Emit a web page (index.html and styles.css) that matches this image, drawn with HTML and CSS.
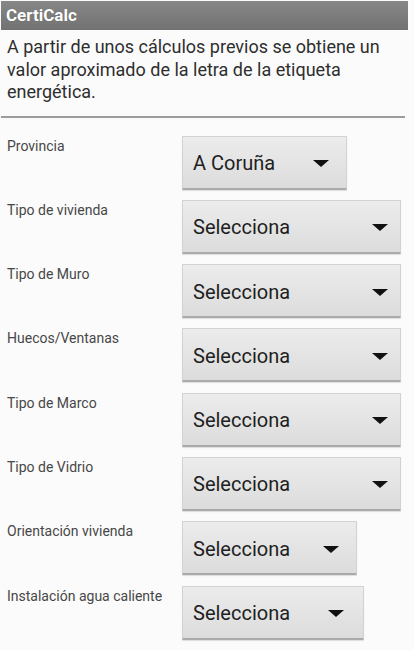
FILE: index.html
```html
<!DOCTYPE html>
<html lang="es">
<head>
<meta charset="utf-8">
<title>CertiCalc</title>
<link rel="stylesheet" href="styles.css">
</head>
<body>
<div class="page">
  <div class="titlebar">CertiCalc</div>
  <p class="intro">A partir de unos cálculos previos se obtiene un valor aproximado de la letra de la etiqueta energética.</p>
  <div class="divider"></div>
  <div class="form">
    <div class="row">
      <div class="label">Provincia</div>
      <div class="spinner spinner-prov"><span class="value">A Coruña</span><span class="arrow"></span></div>
    </div>
    <div class="row">
      <div class="label">Tipo de vivienda</div>
      <div class="spinner spinner-wide"><span class="value">Selecciona</span><span class="arrow"></span></div>
    </div>
    <div class="row">
      <div class="label">Tipo de Muro</div>
      <div class="spinner spinner-wide"><span class="value">Selecciona</span><span class="arrow"></span></div>
    </div>
    <div class="row">
      <div class="label">Huecos/Ventanas</div>
      <div class="spinner spinner-wide"><span class="value">Selecciona</span><span class="arrow"></span></div>
    </div>
    <div class="row">
      <div class="label">Tipo de Marco</div>
      <div class="spinner spinner-wide"><span class="value">Selecciona</span><span class="arrow"></span></div>
    </div>
    <div class="row">
      <div class="label">Tipo de Vidrio</div>
      <div class="spinner spinner-wide"><span class="value">Selecciona</span><span class="arrow"></span></div>
    </div>
    <div class="row">
      <div class="label">Orientación vivienda</div>
      <div class="spinner spinner-orient"><span class="value">Selecciona</span><span class="arrow"></span></div>
    </div>
    <div class="row">
      <div class="label">Instalación agua caliente</div>
      <div class="spinner spinner-agua"><span class="value">Selecciona</span><span class="arrow"></span></div>
    </div>
  </div>
</div>
</body>
</html>
```

FILE: styles.css
```css
html, body {
  margin: 0;
  padding: 0;
  background: #fbfbfb;
}

body {
  font-family: Roboto, "Liberation Sans", Arial, sans-serif;
  color: #333;
}

.page {
  width: 414px;
  height: 650px;
  overflow: hidden;
  padding: 1px 6px 0 1px;
  box-sizing: border-box;
}

.titlebar {
  height: 29px;
  background: linear-gradient(#878787, #727272);
  color: #fff;
  font-weight: bold;
  font-size: 17px;
  line-height: 29px;
  padding-left: 5px;
  text-shadow: 0 0 1px rgba(0,0,0,0.3);
}

.intro {
  margin: 6px 0 0 0;
  padding: 0 4px 0 6px;
  font-size: 18px;
  line-height: 22.5px;
  color: #2e2e2e;
}

.divider {
  margin-top: 12px;
  height: 2px;
  background: #9c9c9c;
  margin-right: 3px;
}

.form {
  display: flex;
  flex-direction: column;
  gap: 10.3px;
  margin-top: 18px;
}

.row {
  display: grid;
  grid-template-columns: 181px auto;
  align-items: start;
}

.label {
  padding-left: 6px;
  padding-top: 2px;
  font-size: 14px;
  line-height: 17px;
  color: #474747;
  white-space: nowrap;
}

.spinner {
  box-sizing: border-box;
  height: 54px;
  display: flex;
  align-items: center;
  padding-left: 10px;
  background: linear-gradient(#ececec, #dcdcdc);
  border: 1px solid #d2d2d2;
  border-bottom: 2px solid #aaaaaa;
  border-radius: 1px;
  box-shadow: 0 1px 1px rgba(0,0,0,0.12);
}

.value {
  font-size: 20px;
  color: #1e1e1e;
  padding-top: 2px;
}

.arrow {
  margin-left: auto;
  width: 0;
  height: 0;
  border-left: 8px solid transparent;
  border-right: 8px solid transparent;
  border-top: 7px solid #111;
  margin-top: 3px;
}

.spinner-prov {
  width: 165px;
  padding-right: 17px;
}

.spinner-wide {
  width: 219px;
  padding-right: 12px;
}

.spinner-orient {
  width: 175px;
  padding-right: 17px;
}

.spinner-agua {
  width: 182px;
  padding-right: 19px;
}
```
